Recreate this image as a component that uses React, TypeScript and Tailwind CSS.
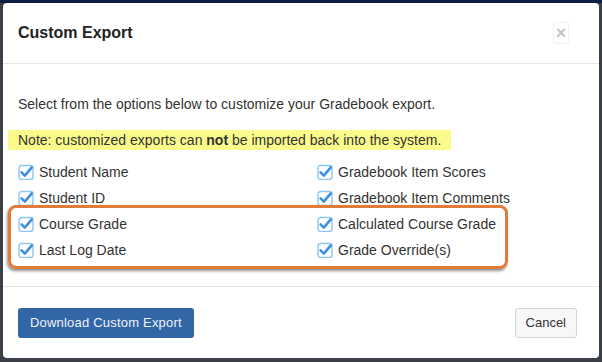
import React from "react";

function Check() {
  return (
    <svg width="16" height="16" viewBox="0 0 16 16" className="shrink-0">
      <rect x="1" y="1.5" width="14" height="14" rx="2.5" fill="#fff" stroke="#8ec6ef" strokeWidth="1.4" />
      <path d="M3.6 8.4 L6.8 11.6 L13.8 3.4" fill="none" stroke="#3b91e0" strokeWidth="2.6" strokeLinecap="round" strokeLinejoin="round" />
    </svg>
  );
}

function Item({ label }: { label: string }) {
  return (
    <div className="flex h-[26px] items-center gap-[5px]">
      <Check />
      <span className="text-[14px] text-[#333]">{label}</span>
    </div>
  );
}

export default function App() {
  const left = ["Student Name", "Student ID", "Course Grade", "Last Log Date"];
  const right = ["Gradebook Item Scores", "Gradebook Item Comments", "Calculated Course Grade", "Grade Override(s)"];
  return (
    <div
      className="h-[362px] w-[602px] overflow-hidden border-t-[3px] border-[#0c2046] bg-[#3b4048] pl-[3px]"
      style={{ fontFamily: '"Liberation Sans", Arial, sans-serif' }}
    >
      <div className="flex h-[355px] w-[596px] flex-col rounded-[4px] bg-white">
        <div className="flex h-[61px] items-center justify-between border-b border-[#e5e5e5] pl-[15px] pr-[30px]">
          <h4 className="text-[16px] font-bold text-[#222]">Custom Export</h4>
          <div className="flex h-[22px] w-[16px] items-center justify-center rounded-[3px] border border-[#f0f0f0] text-[18px] font-bold leading-none text-[#c6c6c6]">
            ×
          </div>
        </div>
        <div className="relative flex h-[222px] flex-col px-[15px] pt-[30px]">
          <p className="text-[14px] leading-[20px] text-[#333]">
            Select from the options below to customize your Gradebook export.
          </p>
          <div className="mt-[16px] ml-[-10px] w-fit bg-[#fbfb8c] px-[10px] text-[14px] leading-[20px] text-[#333]">
            Note: customized exports can <b>not</b> be imported back into the system.
          </div>
          <div className="mt-[9px] grid grid-cols-[299px_1fr]">
            <div className="flex flex-col">
              {left.map((l) => (
                <Item key={l} label={l} />
              ))}
            </div>
            <div className="flex flex-col">
              {right.map((l) => (
                <Item key={l} label={l} />
              ))}
            </div>
          </div>
          <div className="pointer-events-none absolute top-[141px] left-[5px] h-[64px] w-[500px] rounded-[8px] border-[3px] border-[#e07b39] shadow-[-1px_2px_3px_rgba(0,0,0,0.45)]" />
        </div>
        <div className="flex flex-1 items-start justify-between border-t border-[#e5e5e5] px-[15px] pt-[21px]">
          <button className="h-[30px] rounded-[3px] bg-[#3366a6] px-[12px] text-[13px] tracking-[0.2px] text-[#eef2f7]">
            Download Custom Export
          </button>
          <button className="mr-[7px] h-[30px] rounded-[3px] border border-[#d4d4d4] bg-[#f7f7f7] px-[10px] text-[13px] text-[#333]">
            Cancel
          </button>
        </div>
      </div>
    </div>
  );
}
